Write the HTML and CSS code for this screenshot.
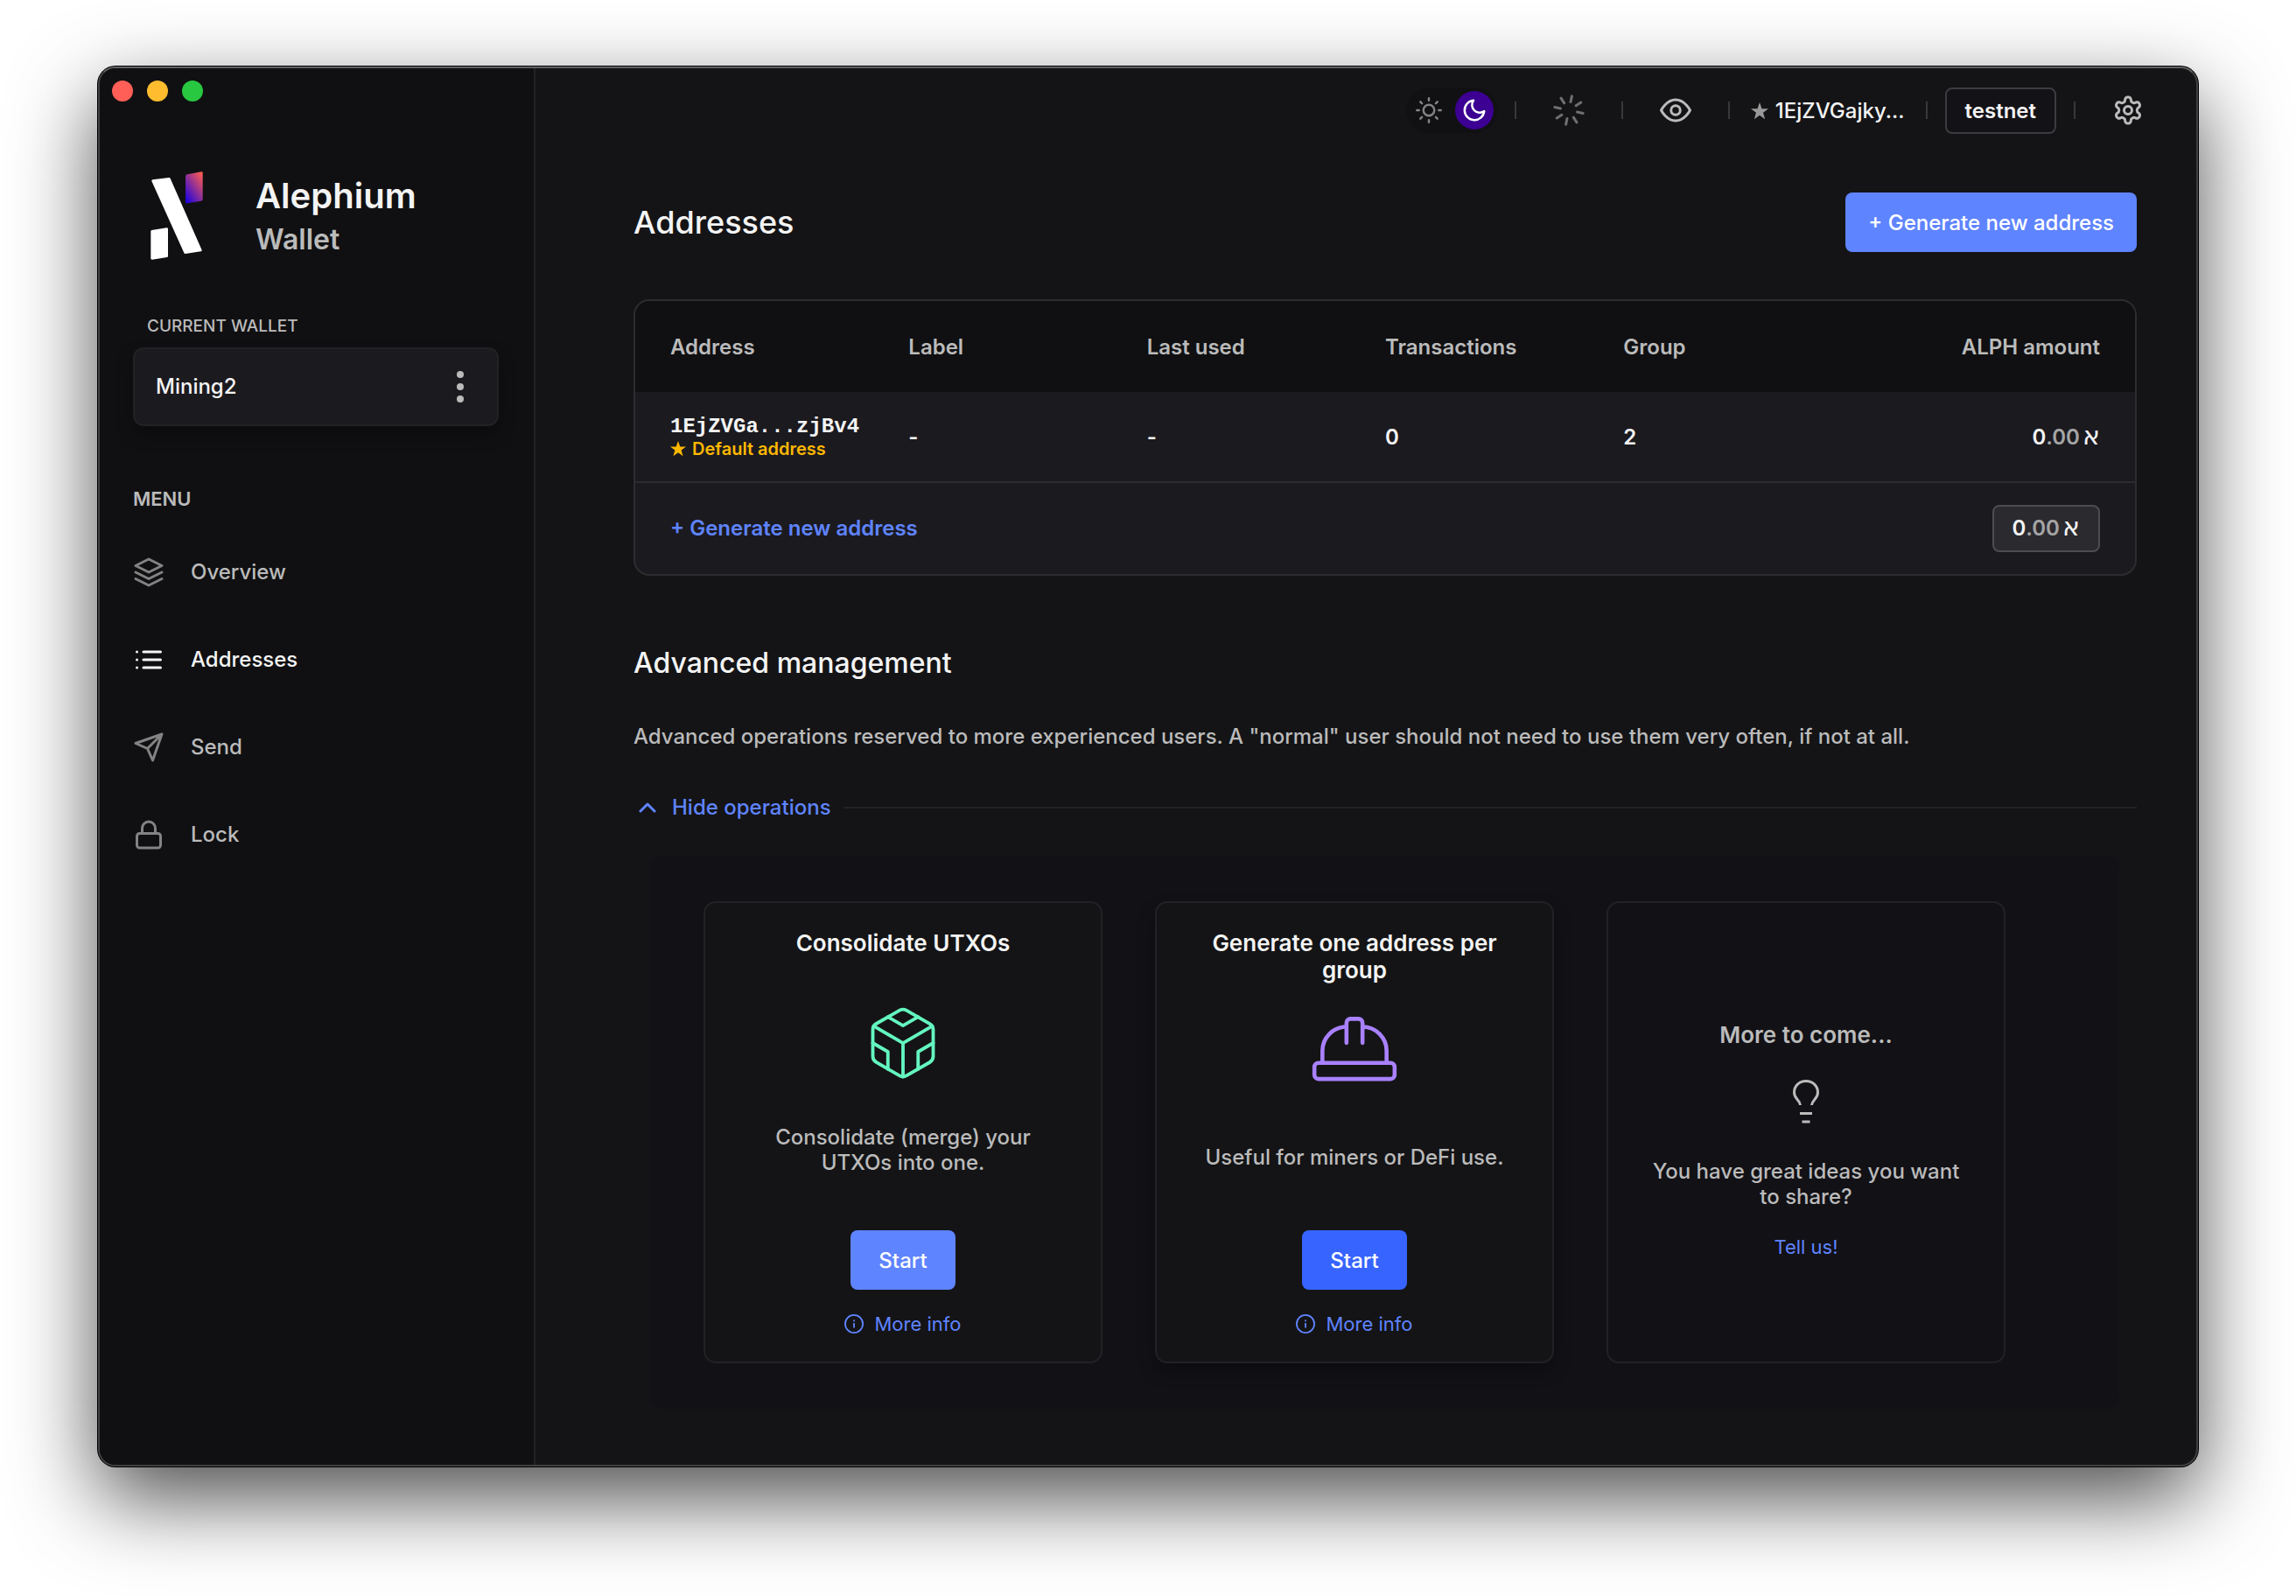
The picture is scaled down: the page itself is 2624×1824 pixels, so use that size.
FILE: index.html
```html
<!DOCTYPE html>
<html lang="en">
<head>
<meta charset="utf-8">
<title>Alephium Wallet</title>
<link rel="stylesheet" href="styles.css">
</head>
<body>
<div class="window">
  <aside class="sidebar">
    <div class="lights"><span class="light red"></span><span class="light yellow"></span><span class="light green"></span></div>
    <div class="brand">
      <svg class="logo" viewBox="0 0 180 303" aria-hidden="true">
        <defs><linearGradient id="flag" x1="0.1" y1="1" x2="0.9" y2="0"><stop offset="0" stop-color="#1b00e0"/><stop offset="1" stop-color="#ff5d51"/></linearGradient></defs>
        <g stroke-linejoin="round" stroke-width="8">
          <path fill="#fff" stroke="#fff" d="M8 32 L64 25 L172 270 L119 278 Z"/>
          <path fill="#fff" stroke="#fff" d="M5 205 L56 197 L56 290 L5 298 Z"/>
          <path fill="url(#flag)" d="M120 17 Q120 11 126 10 L174 1 Q179 0 179 5 L179 95 Q179 100 174 101 L126 109 Q120 110 120 104 Z"/>
        </g>
      </svg>
      <div class="brand-text"><div class="brand-name">Alephium</div><div class="brand-sub">Wallet</div></div>
    </div>
    <div class="wallet-label" id="wallet-label">CURRENT WALLET</div>
    <button class="wallet" type="button" aria-describedby="wallet-label">
      <span>Mining2</span>
      <svg class="dots" viewBox="0 0 8 36" aria-hidden="true"><circle cx="4" cy="4" r="4"/><circle cx="4" cy="18" r="4"/><circle cx="4" cy="32" r="4"/></svg>
    </button>
    <div class="menu-title">MENU</div>
    <nav class="menu">
      <a class="menu-item" href="#overview"><svg class="icon" viewBox="0 0 24 24"><path d="M12 2 2 7l10 5 10-5-10-5z"/><path d="m2 17 10 5 10-5"/><path d="m2 12 10 5 10-5"/></svg>Overview</a>
      <a class="menu-item active" href="#addresses"><svg class="icon" viewBox="0 0 24 24"><path d="M8 6h13M8 12h13M8 18h13M3 6h.01M3 12h.01M3 18h.01"/></svg>Addresses</a>
      <a class="menu-item" href="#send"><svg class="icon" viewBox="0 0 24 24"><path d="M22 2 11 13M22 2l-7 20-4-9-9-4 20-7z"/></svg>Send</a>
      <a class="menu-item" href="#lock"><svg class="icon" viewBox="0 0 24 24"><rect x="3" y="11" width="18" height="11" rx="2"/><path d="M7 11V7a5 5 0 0 1 10 0v4"/></svg>Lock</a>
    </nav>
  </aside>

  <div class="page">
    <header class="topbar">
      <div class="theme">
        <button class="theme-btn" type="button" aria-label="Light theme"><svg class="icon sun" viewBox="0 0 24 24"><circle cx="12" cy="12" r="5"/><path d="M12 1v2M12 21v2M4.22 4.22l1.42 1.42M18.36 18.36l1.42 1.42M1 12h2M21 12h2M4.22 19.78l1.42-1.42M18.36 5.64l1.42-1.42"/></svg></button>
        <button class="theme-btn on" type="button" aria-label="Dark theme"><svg class="icon moon" viewBox="0 0 24 24"><path d="M21 12.79A9 9 0 1 1 11.21 3 7 7 0 0 0 21 12.79z"/></svg></button>
      </div>
      <span class="sep"></span>
      <button class="tool dim" type="button" aria-label="Loading"><svg class="icon" viewBox="0 0 24 24"><g transform="rotate(12 12 12)"><path d="M12 1v4.500M12 18.500v4.500M4.220 4.220l3.200 3.200M16.580 16.580l3.200 3.200M1 12h4.500M18.500 12h4.500M4.220 19.780l3.200-3.200M16.580 7.420l3.200-3.200"/></g></svg></button>
      <span class="sep"></span>
      <button class="tool" type="button" aria-label="Hide amounts"><svg class="icon" viewBox="0 0 24 24"><path d="M1 12s4-8 11-8 11 8 11 8-4 8-11 8-11-8-11-8z"/><circle cx="12" cy="12" r="3.5"/></svg></button>
      <span class="sep"></span>
      <button class="address-btn" type="button"><svg class="star" viewBox="0 0 20 20" aria-hidden="true"><path d="M10 0l2.5 7.2H20l-6 4.6 2.2 7.4L10 14.8l-6.2 4.4L6 11.8 0 7.2h7.5z"/></svg>1EjZVGajky...</button>
      <span class="sep"></span>
      <button class="network" type="button">testnet</button>
      <span class="sep"></span>
      <button class="tool" type="button" aria-label="Settings"><svg class="icon" viewBox="0 0 24 24"><path d="M12.22 2h-.44a2 2 0 0 0-2 2v.18a2 2 0 0 1-1 1.73l-.43.25a2 2 0 0 1-2 0l-.15-.08a2 2 0 0 0-2.73.73l-.22.38a2 2 0 0 0 .73 2.73l.15.1a2 2 0 0 1 1 1.72v.51a2 2 0 0 1-1 1.74l-.15.09a2 2 0 0 0-.73 2.73l.22.38a2 2 0 0 0 2.73.73l.15-.08a2 2 0 0 1 2 0l.43.25a2 2 0 0 1 1 1.73V20a2 2 0 0 0 2 2h.44a2 2 0 0 0 2-2v-.18a2 2 0 0 1 1-1.73l.43-.25a2 2 0 0 1 2 0l.15.08a2 2 0 0 0 2.73-.73l.22-.39a2 2 0 0 0-.73-2.73l-.15-.08a2 2 0 0 1-1-1.74v-.5a2 2 0 0 1 1-1.74l.15-.09a2 2 0 0 0 .73-2.73l-.22-.38a2 2 0 0 0-2.73-.73l-.15.08a2 2 0 0 1-2 0l-.43-.25a2 2 0 0 1-1-1.73V4a2 2 0 0 0-2-2z"/><circle cx="12" cy="12" r="3"/></svg></button>
    </header>

    <main class="content">
      <div class="page-head">
        <h1 class="title">Addresses</h1>
        <button class="primary" type="button">+ Generate new address</button>
      </div>

      <div class="card-table">
        <table class="addresses">
          <thead><tr><th>Address</th><th>Label</th><th>Last used</th><th>Transactions</th><th>Group</th><th class="num">ALPH amount</th></tr></thead>
          <tbody>
            <tr>
              <td><div class="hash">1EjZVGa...zjBv4</div><div class="default"><svg class="star-sm" viewBox="0 0 20 20" aria-hidden="true"><path d="M10 0l2.5 7.2H20l-6 4.6 2.2 7.4L10 14.8l-6.2 4.4L6 11.8 0 7.2h7.5z"/></svg>Default address</div></td>
              <td>-</td><td>-</td><td>0</td><td>2</td>
              <td class="num"><span class="amount">0<span class="cents">.00</span><bdi class="aleph">א</bdi></span></td>
            </tr>
          </tbody>
        </table>
        <div class="table-foot">
          <button class="link-strong" type="button">+ Generate new address</button>
          <div class="total"><span class="amount">0<span class="cents">.00</span><bdi class="aleph">א</bdi></span></div>
        </div>
      </div>

      <h2 class="section">Advanced management</h2>
      <p class="lead">Advanced operations reserved to more experienced users. A "normal" user should not need to use them very often, if not at all.</p>
      <div class="divider">
        <button class="toggle" type="button"><svg class="chevron" viewBox="0 0 20 12" aria-hidden="true"><path d="M2 10l8-8 8 8"/></svg>Hide operations</button>
        <span class="rule"></span>
      </div>

      <section class="operations">
        <article class="op">
          <h3 class="op-title">Consolidate UTXOs</h3>
          <svg class="op-icon cube" viewBox="0 0 24 24"><path d="M21 16V8a2 2 0 0 0-1-1.73l-7-4a2 2 0 0 0-2 0l-7 4A2 2 0 0 0 3 8v8a2 2 0 0 0 1 1.73l7 4a2 2 0 0 0 2 0l7-4A2 2 0 0 0 21 16z"/><path d="M7.5 4.21 12 6.81l4.5-2.6M7.5 19.79V14.6L3 12M21 12l-4.5 2.6v5.19M3.27 6.96 12 12.01l8.73-5.05M12 22.08V12"/></svg>
          <p class="op-text">Consolidate (merge) your UTXOs into one.</p>
          <button class="primary" type="button">Start</button>
          <a class="info" href="#utxos"><svg class="info-icon" viewBox="0 0 24 24"><circle cx="12" cy="12" r="11"/><path d="M12 17v-6M12 7v2"/></svg>More info</a>
        </article>
        <article class="op raised">
          <h3 class="op-title">Generate one address per group</h3>
          <svg class="op-icon hat" viewBox="0 0 24 24"><path d="M2 18a1 1 0 0 0 1 1h18a1 1 0 0 0 1-1v-2a1 1 0 0 0-1-1H3a1 1 0 0 0-1 1v2z"/><path d="M10 10V5a1 1 0 0 1 1-1h2a1 1 0 0 1 1 1v5"/><path d="M4 15v-3a6 6 0 0 1 6-6M14 6a6 6 0 0 1 6 6v3"/></svg>
          <p class="op-text">Useful for miners or DeFi use.</p>
          <button class="primary strong" type="button">Start</button>
          <a class="info" href="#groups"><svg class="info-icon" viewBox="0 0 24 24"><circle cx="12" cy="12" r="11"/><path d="M12 17v-6M12 7v2"/></svg>More info</a>
        </article>
        <article class="op placeholder">
          <h3 class="op-soon">More to come...</h3>
          <svg class="bulb" viewBox="0 0 30 50" aria-hidden="true"><path d="M8.5 29C8 23 1.5 22 1.5 14.5 1.5 7 7.5 1.5 15 1.5S28.5 7 28.5 14.5C28.5 22 22 23 21.5 29M8 38.5h14M10.500 48h9"/></svg>
          <p class="idea">You have great ideas you want to share?</p>
          <a class="info" href="#feedback">Tell us!</a>
        </article>
      </section>
    </main>
  </div>
</div>
</body>
</html>
```
FILE: styles.css
```css
:root {
  --text: #f4f4f4;
  --muted: #bbbbbb;
  --faint: #838383;
  --accent: #5f84ff;
  --bg: #141416;
  --bg-deep: #101012;
  --bg-panel: #121116;
  --bg-raised: #1b1a1f;
  --line: #2d2d2f;
  --line-soft: #222225;
}

* { box-sizing: border-box; }

body {
  margin: 0;
  min-height: 100vh;
  padding: 76px 112px 148px;
  display: flex;
  background: #fff;
  color: var(--text);
  font-family: Inter, "DejaVu Sans", sans-serif;
  font-size: 24px;
  font-weight: 500;
  line-height: 30px;
}

h1, h2, h3, p { margin: 0; font-weight: inherit; }
a { color: inherit; text-decoration: none; }
svg { display: block; flex: none; }
button {
  margin: 0;
  padding: 0;
  border: 0;
  background: none;
  color: inherit;
  font: inherit;
  cursor: pointer;
}

.icon {
  width: 36px;
  height: 36px;
  fill: none;
  stroke: currentColor;
  stroke-width: 2;
  stroke-linecap: round;
  stroke-linejoin: round;
}

.window {
  flex: 1;
  display: flex;
  overflow: hidden;
  border: 2px solid #404042;
  border-top-color: #626264;
  border-radius: 20px;
  background: var(--bg);
  box-shadow: 0 0 0 1px #000, 0 36px 96px rgba(0, 0, 0, .7);
}

/* Sidebar */
.sidebar {
  width: 498px;
  flex: none;
  padding: 14px 40px 40px 38px;
  border-right: 2px solid var(--line-soft);
  background: var(--bg-deep);
}
.lights { display: flex; gap: 16px; margin-left: -24px; }
.light { width: 24px; height: 24px; border-radius: 50%; }
.red { background: #ff5f57; }
.yellow { background: #febc2e; }
.green { background: #28c840; }

.brand { display: flex; align-items: center; gap: 60px; margin: 80px 0 0 20px; }
.logo { width: 60px; height: 101px; }
.brand-text { display: grid; gap: 6px; }
.brand-name { font-size: 40px; line-height: 48px; font-weight: 600; }
.brand-sub { font-size: 32px; line-height: 40px; font-weight: 600; color: var(--muted); }

.wallet-label { margin: 64px 0 12px 16px; font-size: 19px; line-height: 24px; font-weight: 500; color: var(--muted); }
.wallet {
  width: 100%;
  height: 90px;
  padding: 0 38px 0 24px;
  display: flex;
  align-items: center;
  justify-content: space-between;
  border: 2px solid var(--line-soft);
  border-radius: 12px;
  background: var(--bg-raised);
  box-shadow: 0 10px 20px rgba(0, 0, 0, .3);
}
.dots { width: 8px; height: 36px; fill: var(--muted); }

.menu-title { margin: 70px 0 41px; font-size: 22px; line-height: 26px; font-weight: 600; color: var(--muted); }
.menu { display: grid; gap: 40px; }
.menu-item { display: flex; align-items: center; gap: 30px; height: 60px; color: var(--muted); }
.menu-item .icon { color: var(--faint); }
.menu-item.active, .menu-item.active .icon { color: var(--text); }

/* Top bar */
.page { flex: 1; min-width: 0; }
.topbar { height: 96px; padding-right: 38px; display: flex; align-items: center; justify-content: flex-end; gap: 20px; }
.theme { display: flex; gap: 8px; padding: 4px; border-radius: 26px; background: #111113; }
.theme-btn { width: 44px; height: 44px; display: grid; place-items: center; border-radius: 50%; color: var(--faint); }
.theme-btn.on { background: #3c0092; color: #fff; }
.sun, .moon { width: 30px; height: 30px; }
.sep { width: 2px; height: 20px; background: #38383a; }
.tool { width: 80px; height: 52px; display: grid; place-items: center; color: var(--muted); }
.tool.dim { color: #6f6f71; }
.address-btn { display: flex; align-items: center; gap: 8px; padding: 2px 4px 0; }
.star { width: 20px; height: 20px; fill: #999; }
.network { height: 53px; padding: 1px 21px 0; border: 2px solid #3c3c3f; border-radius: 8px; background: #131217; font-weight: 600; }

/* Content */
.content { padding: 46px 68px 64px 112px; }
.page-head { display: flex; align-items: center; justify-content: space-between; margin-bottom: 54px; }
.title { font-size: 36px; line-height: 44px; }
.primary { height: 68px; padding: 2px 26px 0; border-radius: 8px; background: var(--accent); color: #fff; }
.primary.strong { background: #3764ff; }

.card-table { overflow: hidden; border: 2px solid var(--line); border-radius: 18px; background: var(--bg-raised); }
.addresses { display: block; }
.addresses tr { display: grid; grid-template-columns: repeat(6, 1fr); align-items: center; height: 102px; padding: 2px 40px 0; }
.addresses thead tr { height: 104px; background: var(--bg-deep); }
.addresses thead, .addresses tbody { display: block; }
.addresses th, .addresses td { padding: 0; text-align: left; font-weight: 600; }
.addresses th { color: var(--muted); }
.addresses .num { text-align: right; }
.hash { padding-top: 2px; font-family: "Courier New", "Liberation Mono", monospace; font-weight: 700; line-height: 24px; }
.default { display: flex; align-items: center; gap: 7px; font-size: 20px; line-height: 26px; color: #ffb800; }
.star-sm { width: 18px; height: 18px; fill: currentColor; }
.amount { display: inline-flex; align-items: baseline; }
.cents { color: #a5a5a5; }
.aleph { margin-left: 3px; font-size: 30px; line-height: 24px; font-weight: 400; }
.table-foot { display: flex; align-items: center; justify-content: space-between; height: 106px; padding: 0 40px; border-top: 2px solid var(--line); }
.link-strong { font-weight: 600; color: var(--accent); }
.total { padding: 10px 21px 10px 20px; border: 2px solid #4d4c51; border-radius: 8px; background: #2b2a2f; font-weight: 600; }

.section { margin: 80px 0 49px; font-size: 32px; line-height: 40px; }
.lead { color: var(--muted); }
.divider { display: flex; align-items: center; gap: 14px; margin: 50px 0 40px; }
.toggle { display: flex; align-items: center; gap: 18px; padding: 1px 0 0 6px; color: var(--accent); }
.chevron { width: 20px; height: 12px; fill: none; stroke: currentColor; stroke-width: 3; stroke-linecap: round; stroke-linejoin: round; }
.rule { flex: 1; height: 2px; background: var(--line-soft); }

.operations { display: flex; gap: 60px; margin: 0 20px; padding: 52px 60px; border-radius: 12px; background: var(--bg-panel); }
.op {
  width: 456px;
  min-height: 528px;
  padding: 30px 44px 28px;
  display: flex;
  flex-direction: column;
  align-items: center;
  border: 2px solid var(--line-soft);
  border-radius: 14px;
  background: var(--bg);
  text-align: center;
}
.op.raised { box-shadow: 0 10px 20px rgba(0, 0, 0, .3); }
.op-title { min-height: 62px; margin-bottom: 22px; font-size: 26px; line-height: 31px; font-weight: 600; }
.op-icon { fill: none; stroke: currentColor; stroke-width: 1; stroke-linecap: round; stroke-linejoin: round; }
.cube { width: 92px; height: 92px; color: #64f6c0; }
.hat { width: 110px; height: 110px; color: #a981ff; }
.op-text { flex: 1; display: flex; align-items: center; margin-bottom: 17px; line-height: 29px; color: var(--muted); }
.op .primary { min-width: 120px; }
.info { display: flex; align-items: center; gap: 12px; margin-top: 24px; font-size: 22px; line-height: 30px; font-weight: 400; color: var(--accent); }
.info-icon { width: 22px; height: 22px; fill: none; stroke: currentColor; stroke-width: 2; }
.op.placeholder { justify-content: center; padding-bottom: 12px; background: none; }
.op-soon { font-size: 26px; line-height: 31px; font-weight: 600; color: var(--muted); }
.bulb { width: 30px; height: 50px; margin: 36px 0 40px; fill: none; stroke: var(--muted); stroke-width: 3; }
.idea { line-height: 29px; color: var(--muted); }
.placeholder .info { margin-top: 28px; }
```
